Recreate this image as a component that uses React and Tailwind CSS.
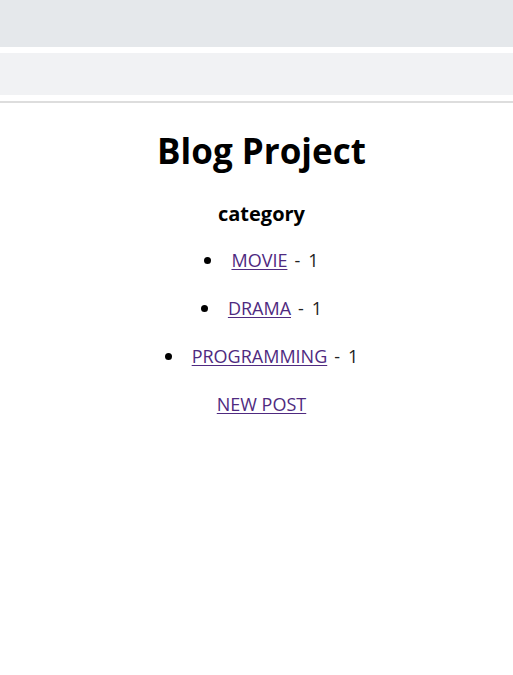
const categories = [
  { name: 'MOVIE', count: 1 },
  { name: 'DRAMA', count: 1 },
  { name: 'PROGRAMMING', count: 1 },
];

const App = () => {
  return (
    <div className="min-h-screen bg-white font-['Open_Sans','Noto_Sans_CJK_KR',sans-serif] text-black">
      {/* top bars */}
      <div className="h-[47px] bg-[#e5e8eb]" />
      <div className="mt-[6px] h-[42px] bg-[#f1f2f4]" />
      <div className="mt-[6px] h-[2px] bg-[#dddddd]" />

      <div className="flex flex-col items-center pl-[10px]">
        <h1 className="mt-[24px] text-[35px] font-bold leading-[48px]">Blog Project</h1>
        <h3 className="mt-[25px] text-[20px] font-bold leading-[28px]">category</h3>

        <ul className="mt-[8px] flex flex-col items-center">
          {categories.map((c) => (
            <li key={c.name} className="flex h-[48px] items-center text-[18px]">
              <span className="mr-[20px] h-[7px] w-[7px] rounded-full bg-black" />
              <a href="#" className="text-[#4f2a80] underline underline-offset-2">{c.name}</a>
              <span className="ml-[7px] text-[#222]">-</span>
              <span className="ml-[8px] text-[#222]">{c.count}</span>
            </li>
          ))}
        </ul>

        <a href="#" className="text-[18px] leading-[48px] text-[#4f2a80] underline underline-offset-2">
          NEW POST
        </a>
      </div>
    </div>
  );
};

export default App;
